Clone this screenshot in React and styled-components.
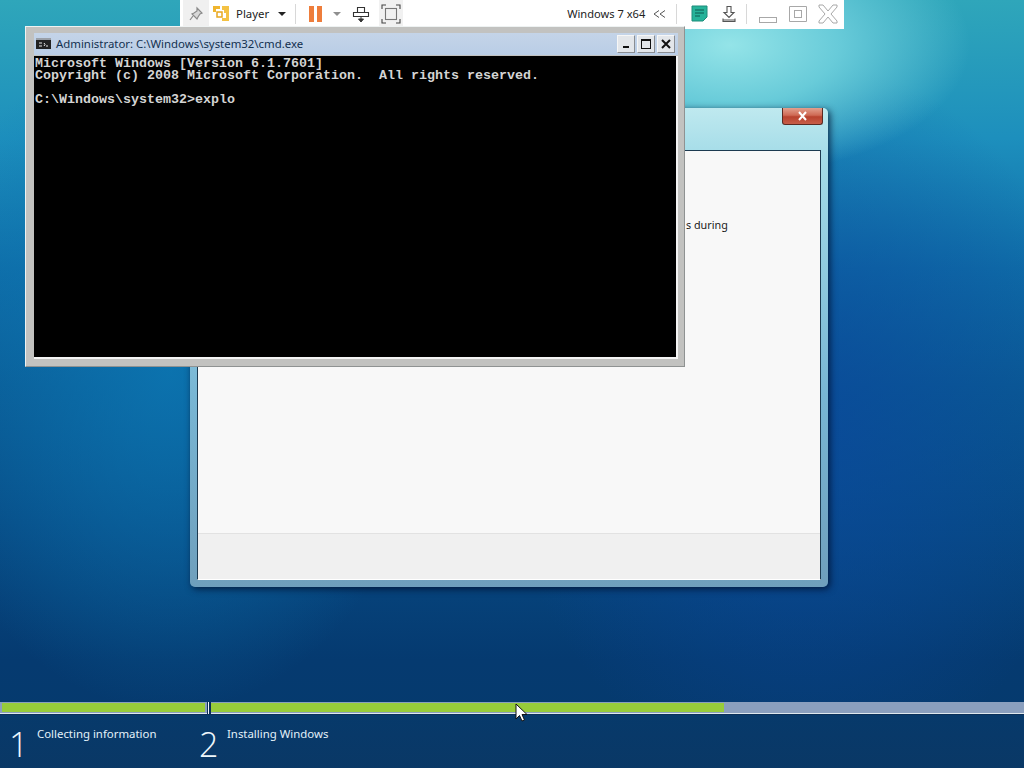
import React from "react";
import styled, { createGlobalStyle } from "styled-components";

const Global = createGlobalStyle`
  html, body { margin: 0; padding: 0; background: #063a6c; }
  * { box-sizing: border-box; }
`;

const Desktop = styled.div`
  position: relative;
  width: 1024px;
  height: 768px;
  overflow: hidden;
  display: flex;
  flex-direction: column;
  justify-content: flex-end;
  font-family: "Noto Sans", "Open Sans", sans-serif;
  background:
    radial-gradient(ellipse 240px 130px at 730px 45px, #94e4e8 0%, #68cbd9 45%, rgba(60,170,200,0) 100%),
    radial-gradient(ellipse 260px 340px at 170px 370px, rgba(12,120,180,0.8) 0%, rgba(12,110,170,0) 100%),
    radial-gradient(ellipse 300px 360px at 800px 420px, rgba(10,72,156,0.8) 0%, rgba(10,72,156,0) 100%),
    linear-gradient(180deg, #2fa6ba 0%, #1d8fbd 18%, #0f6da8 35%, #0a5a94 50%, #074a84 68%, #053a70 86%, #063a6c 100%);
`;

const Toolbar = styled.div`
  position: absolute;
  left: 180px;
  top: 0;
  width: 664px;
  height: 29px;
  padding-bottom: 2px;
  background: #fff;
  display: flex;
  align-items: center;
  font-size: 11.4px;
  color: #222;
`;

const PinBox = styled.div`
  width: 26px;
  height: 27px;
  margin-left: 3px;
  background: #f0f0f0;
  display: flex;
  align-items: center;
  justify-content: center;
`;

const ToolIcon = styled.div`
  display: flex;
  align-items: center;
  justify-content: center;
  margin-left: ${(p) => p.$ml || 0}px;
  width: ${(p) => p.$w || 22}px;
  height: 27px;
  background: ${(p) => p.$bg || "transparent"};
`;

const ToolLabel = styled.span`
  margin-left: ${(p) => p.$ml || 0}px;
  font-size: ${(p) => p.$size || 11.4}px;
  white-space: nowrap;
`;

const ToolSep = styled.div`
  width: 1px;
  height: 20px;
  background: #d8d8d8;
  margin-left: ${(p) => p.$ml || 0}px;
`;

const Caret = styled.div`
  width: 0;
  height: 0;
  margin-left: ${(p) => p.$ml || 0}px;
  border-left: 4px solid transparent;
  border-right: 4px solid transparent;
  border-top: 4px solid ${(p) => p.$color || "#222"};
`;

const CmdWindow = styled.div`
  position: absolute;
  z-index: 2;
  left: 25px;
  top: 26px;
  width: 660px;
  height: 341px;
  padding: 6px 6px 7px 8px;
  background: #c2c2c0;
  border: 1px solid #eef2f2;
  border-right-color: #8f9292;
  border-bottom-color: #8f9292;
  display: flex;
  flex-direction: column;
`;

const CmdTitleBar = styled.div`
  height: 22px;
  flex: none;
  display: flex;
  align-items: center;
  padding: 0 0 1px 2px;
  background: linear-gradient(180deg, #c4d4e8 0%, #b9cde6 100%);
`;

const CmdTitle = styled.span`
  margin-left: 5px;
  font-size: 11.4px;
  color: #12304f;
  white-space: nowrap;
`;

const CmdControls = styled.div`
  margin-left: auto;
  margin-right: 3px;
  display: flex;
  gap: 2px;
`;

const CmdButton = styled.div`
  width: 18px;
  height: 18px;
  background: #e3e6ea;
  border: 1px solid #f6f6f6;
  border-right-color: #8a8d92;
  border-bottom-color: #8a8d92;
  display: flex;
  align-items: center;
  justify-content: center;
`;

const Console = styled.pre`
  flex: 1;
  margin: 0;
  margin-top: 1px;
  padding: 2px 0 0 1px;
  background: #000;
  color: #d4d4d4;
  border-bottom: 2px solid #f4f4f4;
  border-right: 2px solid #f4f4f4;
  font-family: "Liberation Mono", monospace;
  font-size: 13.33px;
  font-weight: 700;
  line-height: 12px;
`;

const SetupWindow = styled.div`
  position: absolute;
  z-index: 1;
  left: 190px;
  top: 108px;
  width: 638px;
  height: 479px;
  padding: 42px 7px 7px 7px;
  border-radius: 5px;
  background: linear-gradient(180deg, #bfe9ef 0%, #a4dce8 10%, #78b6d4 60%, #6f9fbc 100%);
  box-shadow: 2px 2px 7px rgba(0, 15, 45, 0.8);
  display: flex;
`;

const CloseButton = styled.div`
  position: absolute;
  right: 5px;
  top: 0;
  width: 41px;
  height: 17px;
  border: 1px solid #5a2a22;
  border-top: none;
  border-radius: 0 0 3px 3px;
  background: linear-gradient(180deg, #e2a08e 0%, #cf6a55 45%, #b8422e 55%, #c75d48 100%);
  display: flex;
  align-items: center;
  justify-content: center;
`;

const SetupPanel = styled.div`
  flex: 1;
  background: #f8f8f8;
  border: 1px solid #1c3a50;
  border-bottom-color: #fff;
  display: flex;
  flex-direction: column;
`;

const PanelBody = styled.div`
  flex: 1;
  font-size: 10.8px;
  color: #1a1a1a;
  padding: 66px 0 0 488px;
  white-space: nowrap;
`;

const PanelFooter = styled.div`
  height: 46px;
  flex: none;
  background: #f0f0f0;
  border-top: 1px solid #e2e2e2;
`;

const Footer = styled.div`
  height: 66px;
  flex: none;
  display: flex;
  flex-direction: column;
  background: linear-gradient(180deg, #063a6c 0%, #0a3866 100%);
`;

const BarsRow = styled.div`
  height: 13px;
  flex: none;
  display: flex;
  background: #0a2f58;
`;

const Segment = styled.div`
  width: ${(p) => p.$w}px;
  margin-left: ${(p) => p.$ml || 0}px;
  height: 12px;
  padding: 1px ${(p) => p.$pad || 0}px;
  background: #8a9fbe;
  border-bottom: 1px solid #dfe8ee;
`;

const Fill = styled.div`
  height: 100%;
  background: #97cc3a;
`;

const Divider = styled.div`
  width: 1px;
  height: 12px;
  margin-left: 1px;
  background: #f2f6f8;
`;

const Steps = styled.div`
  display: flex;
  padding-left: 9px;
  color: #e4f2fa;
`;

const Step = styled.div`
  width: ${(p) => p.$w}px;
  display: flex;
  align-items: flex-start;
`;

const StepNumber = styled.span`
  font-family: "Open Sans", "Noto Sans", sans-serif;
  font-size: 34px;
  font-weight: 300;
  line-height: 40px;
  margin-top: 9px;
  width: 28px;
  color: #eef7fc;
`;

const StepLabel = styled.span`
  font-size: 11.4px;
  line-height: 16px;
  margin-top: 11px;
  white-space: nowrap;
`;

const Pointer = styled.svg`
  position: absolute;
  z-index: 3;
  left: 515px;
  top: 703px;
`;

const Glyph = ({ w = 20, h = 20, children }) => (
  <svg width={w} height={h} viewBox={`0 0 ${w} ${h}`} fill="none">{children}</svg>
);

export default function App() {
  return (
    <Desktop>
      <Global />
      <Toolbar>
        <PinBox>
          <Glyph w={16} h={16}>
            <path d="M9 2l5 5-2 1-2 3-1 2-5-5 2-1 3-2z" stroke="#8a8a8a" strokeWidth="1.2" fill="#d8d8d8" />
            <path d="M5 10l-3 4" stroke="#8a8a8a" strokeWidth="1.2" />
          </Glyph>
        </PinBox>
        <ToolIcon $w={18} $ml={3}>
          <Glyph w={18} h={18}>
            <path d="M1 1h7v3H4v3H1z" fill="#f0b52e" />
            <path d="M10 1h7v15h-7v-3h4V8h-2V5H10z" fill="#f4c244" />
            <path d="M5 7h5v5H5z" fill="none" stroke="#e8a820" strokeWidth="1.5" />
          </Glyph>
        </ToolIcon>
        <ToolLabel $ml={6}>Player</ToolLabel>
        <Caret $ml={9} />
        <ToolSep $ml={9} />
        <ToolIcon $w={16} $ml={12}>
          <Glyph w={16} h={18}>
            <rect x="1" y="1" width="5" height="16" fill="#ee7d3b" />
            <rect x="9" y="1" width="5" height="16" fill="#ee7d3b" />
          </Glyph>
        </ToolIcon>
        <Caret $ml={9} $color="#8f8f8f" />
        <ToolIcon $w={20} $ml={10}>
          <Glyph w={18} h={18}>
            <path d="M5.500 2.500h7v5h-7zM1.500 7.500h15v4h-15z" stroke="#333" strokeWidth="1.1" />
            <path d="M9 11v3M6.500 14H11.500L9 17z" stroke="#333" fill="#333" strokeWidth="1" />
          </Glyph>
        </ToolIcon>
        <ToolIcon $w={24} $ml={8} $bg="#f1f1f1">
          <Glyph w={20} h={20}>
            <path d="M1 5V1h4M15 1h4v4M19 15v4h-4M5 19H1v-4" stroke="#444" strokeWidth="1.1" />
            <rect x="4.500" y="4.500" width="11" height="11" stroke="#777" strokeWidth="1.1" />
          </Glyph>
        </ToolIcon>
        <ToolLabel $ml={164} $size={11.1}>Windows 7 x64</ToolLabel>
        <ToolIcon $w={16} $ml={7}>
          <Glyph w={16} h={10}>
            <path d="M7 1.500L2 5l5 3.500M13 1.500L8 5l5 3.500" stroke="#555" strokeWidth="1" />
          </Glyph>
        </ToolIcon>
        <ToolSep $ml={8} />
        <ToolIcon $w={18} $ml={13}>
          <Glyph w={17} h={17}>
            <path d="M1 1h15v11l-4 4H1z" fill="#26b39a" stroke="#1d8c7a" />
            <path d="M4 5h9M4 8h9M4 11h5" stroke="#0c5a50" strokeWidth="1" />
          </Glyph>
        </ToolIcon>
        <ToolIcon $w={18} $ml={12}>
          <Glyph w={16} h={18}>
            <path d="M6 1.500h4v6h3l-5 5-5-5h3z" stroke="#555" strokeWidth="1.1" />
            <path d="M2 13.500v3h12v-3" stroke="#555" strokeWidth="1.1" />
            <path d="M2 15h12" stroke="#555" strokeWidth="1" />
          </Glyph>
        </ToolIcon>
        <ToolSep $ml={8} />
        <ToolIcon $w={20} $ml={11}>
          <Glyph w={20} h={20}>
            <rect x="1.500" y="13.500" width="17" height="5" stroke="#a8a8a8" />
          </Glyph>
        </ToolIcon>
        <ToolIcon $w={20} $ml={10}>
          <Glyph w={20} h={20}>
            <path d="M1.500 2.500h17v15h-17z" stroke="#a8a8a8" />
            <rect x="6.500" y="6.500" width="7" height="7" stroke="#a8a8a8" />
          </Glyph>
        </ToolIcon>
        <ToolIcon $w={22} $ml={9}>
          <Glyph w={20} h={20}>
            <path d="M1 1h4l5 6 5-6h4v2l-6 7 6 7v2h-4l-5-6-5 6H1v-2l6-7-6-7z" stroke="#a8a8a8" fill="#fff" />
          </Glyph>
        </ToolIcon>
      </Toolbar>

      <CmdWindow>
        <CmdTitleBar>
          <Glyph w={15} h={11}>
            <rect width="15" height="11" fill="#222" />
            <rect width="15" height="2" fill="#9aa0a8" />
            <path d="M3 5h3M3 8h3M8 5l1 1.500L8 8M10 8h2" stroke="#e8e8e8" strokeWidth="1" />
          </Glyph>
          <CmdTitle>Administrator: C:\Windows\system32\cmd.exe</CmdTitle>
          <CmdControls>
            <CmdButton>
              <Glyph w={10} h={10}><rect x="2" y="7" width="6" height="2" fill="#111" /></Glyph>
            </CmdButton>
            <CmdButton>
              <Glyph w={12} h={12}><rect x="1.500" y="1.500" width="9" height="9" stroke="#111" /><rect x="1" y="1" width="10" height="2" fill="#111" /></Glyph>
            </CmdButton>
            <CmdButton>
              <Glyph w={12} h={12}><path d="M2 2l8 8M10 2l-8 8" stroke="#111" strokeWidth="2" /></Glyph>
            </CmdButton>
          </CmdControls>
        </CmdTitleBar>
        <Console>{`Microsoft Windows [Version 6.1.7601]
Copyright (c) 2008 Microsoft Corporation.  All rights reserved.

C:\\Windows\\system32>explo`}</Console>
      </CmdWindow>

      <SetupWindow>
        <CloseButton>
          <Glyph w={11} h={10}><path d="M2 1l7 8M9 1l-7 8" stroke="#fff" strokeWidth="2" /></Glyph>
        </CloseButton>
        <SetupPanel>
          <PanelBody>s during</PanelBody>
          <PanelFooter />
        </SetupPanel>
      </SetupWindow>

      <Footer>
        <BarsRow>
          <Segment $w={207} $pad={2}><Fill /></Segment>
          <Divider />
          <Segment $w={814} $ml={2}><Fill style={{ width: `${(514 / 814) * 100}%` }} /></Segment>
        </BarsRow>
        <Steps>
          <Step $w={190}>
            <StepNumber>1</StepNumber>
            <StepLabel>Collecting information</StepLabel>
          </Step>
          <Step $w={200}>
            <StepNumber>2</StepNumber>
            <StepLabel>Installing Windows</StepLabel>
          </Step>
        </Steps>
      </Footer>

      <Pointer width="14" height="20" viewBox="0 0 14 20">
        <path d="M1 1v15l3.500-3.500L7 18l2.500-1-2.500-5.500h5z" fill="#fff" stroke="#111" strokeWidth="1" />
      </Pointer>
    </Desktop>
  );
}
